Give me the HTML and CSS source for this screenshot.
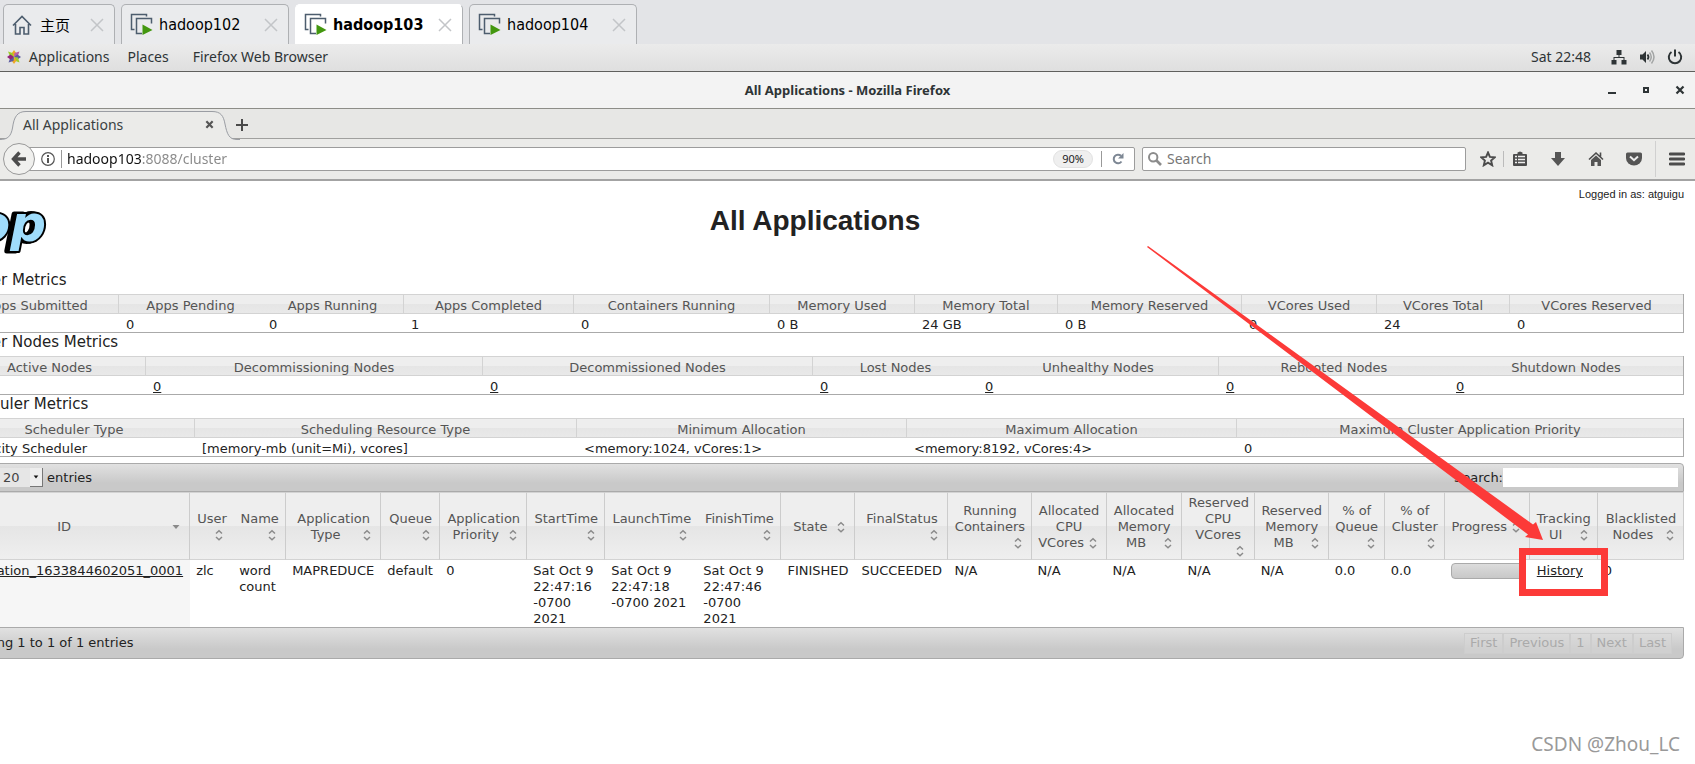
FILE: index.html
```html
<!DOCTYPE html>
<html lang="en">
<head>
<meta charset="utf-8">
<title>All Applications - Mozilla Firefox</title>
<link rel="stylesheet" href="styles.css">
</head>
<body>
<svg class="sprite" aria-hidden="true">
  <symbol id="sort" viewBox="0 0 16 16"><path d="M5 6.500 8 3.800l3 2.700M5 10l3 2.700L11 10" fill="none" stroke="#8a8a8a" stroke-width="1.500"/></symbol>
  <symbol id="sort-desc" viewBox="0 0 16 16"><path d="M4.500 6h7L8 10z" fill="#8a8a8a"/></symbol>
  <symbol id="vm" viewBox="0 0 24 24"><path d="M4.500 16.500H1.500V1.500h15v2" fill="none" stroke="#4d5d6e" stroke-width="1.500"/><path d="M12 20.500H6.500v-15h15v5" fill="none" stroke="#4d5d6e" stroke-width="1.500"/><path d="M12.500 11.500v10.500l10-5z" fill="#43970f"/></symbol>
  <symbol id="x" viewBox="0 0 14 14"><path d="M1 1l12 12M13 1 1 13" fill="none" stroke="#c3c5c8" stroke-width="1.500"/></symbol>
</svg>

<nav class="vm-tabs" aria-label="Virtual machines">
  <div class="vm-tab vm-tab-home">
    <svg class="vm-home" viewBox="0 0 20 20"><path d="M1 10.500 10 1.500l9 9M3.500 9v10h4.500v-6.500h4V19h4.500V9" fill="none" stroke="#4d5d6e" stroke-width="1.600"/></svg>
    <span>主页</span>
    <button class="vm-close" aria-label="Close"><svg><use href="#x"/></svg></button>
  </div>
  <div class="vm-tab"><svg class="vm-icon"><use href="#vm"/></svg><span>hadoop102</span><button class="vm-close" aria-label="Close"><svg><use href="#x"/></svg></button></div>
  <div class="vm-tab vm-tab-active"><svg class="vm-icon"><use href="#vm"/></svg><span>hadoop103</span><button class="vm-close" aria-label="Close"><svg><use href="#x"/></svg></button></div>
  <div class="vm-tab"><svg class="vm-icon"><use href="#vm"/></svg><span>hadoop104</span><button class="vm-close" aria-label="Close"><svg><use href="#x"/></svg></button></div>
</nav>

<header class="desktop-bar">
  <svg class="distro" viewBox="0 0 14 14"><path d="M7 7 4.500 3.500 7 0l2.500 3.500z" fill="#efa724"/><path d="M7 7 3 6.500 1 1.500l4.500 1.500z" fill="#9ccd2a"/><path d="M7 7l.5-4L12.500 1.500 11 5.500z" fill="#b95fa6"/><path d="M7 7l3.500-2.500L14 7l-3.500 2.500z" fill="#5c5ba0"/><path d="M7 7l4 .5 1.500 5L8.500 11z" fill="#9ccd2a"/><path d="M7 7l2.500 3.500L7 14l-2.500-3.500z" fill="#efa724"/><path d="M7 7l-.5 4-5 1.500L3 8.500z" fill="#5c5ba0"/><path d="M7 7 3.500 9.500 0 7l3.500-2.500z" fill="#932279"/></svg>
  <span class="menu-apps">Applications</span>
  <span class="menu-places">Places</span>
  <span class="menu-current">Firefox Web Browser</span>
  <span class="clock">Sat 22:48</span>
  <span class="status-icons">
    <svg width="16" height="16" viewBox="0 0 16 16"><path d="M5.500 1h5v5h-2v2H13.500v3H15.500v4.500h-5V11H12.500V9h-9v2h2v4.500h-5V11h2V8h5V6h-2z" fill="#2e3436"/></svg>
    <svg width="16" height="16" viewBox="0 0 16 16"><path d="M1 5.500h2.500L7 2v12l-3.500-3.500H1z" fill="#2e3436"/><path d="M8.500 5.500q2 2.500 0 5" fill="none" stroke="#2e3436" stroke-width="1.800"/><path d="M10.500 3.500q3.500 4.500 0 9M12.500 1.500q5 6.500 0 13" fill="none" stroke="#a3a5a5" stroke-width="1.500"/></svg>
    <svg width="16" height="16" viewBox="0 0 16 16"><path d="M4.500 3A6.200 6.200 0 1 0 11.500 3M8 .5v7" fill="none" stroke="#2e3436" stroke-width="2"/></svg>
  </span>
</header>

<div class="title-bar">
  <span class="title">All Applications - Mozilla Firefox</span>
  <div class="window-buttons">
    <button aria-label="Minimize"><svg viewBox="0 0 10 10"><path d="M1 7h8v2H1z" fill="#2e3436"/></svg></button>
    <button aria-label="Restore"><svg viewBox="0 0 10 10"><path d="M3 3h4v4H3z" fill="none" stroke="#2e3436" stroke-width="2"/></svg></button>
    <button aria-label="Close window"><svg viewBox="0 0 10 10"><path d="M1.500 1.500l7 7M8.500 1.500l-7 7" stroke="#2e3436" stroke-width="2.200"/></svg></button>
  </div>
</div>

<div class="tab-strip">
  <div class="browser-tab">
    <svg class="tab-shape" viewBox="0 0 240 30"><path d="M0 29.500C8 29.500 11 26 12.500 18 14 7 17 1.500 26 1.500H212C221 1.500 223.500 6 225 14 227 24 229 29.500 237 29.500V31H0z" fill="#ebebe9"/><path d="M0 29.500C8 29.500 11 26 12.500 18 14 7 17 1.500 26 1.500H212C221 1.500 223.500 6 225 14 227 24 229 29.500 237 29.500h3" fill="none" stroke="#9a9da3"/></svg>
    <span class="tab-label">All Applications</span>
    <button class="tab-close" aria-label="Close tab"><svg viewBox="0 0 10 10"><path d="M1.500 1.500l7 7M8.500 1.500l-7 7" stroke="#555" stroke-width="2.400"/></svg></button>
  </div>
  <button class="tab-new" aria-label="New tab"><svg viewBox="0 0 12 12"><path d="M6 0v12M0 6h12" stroke="#4a4a4a" stroke-width="2"/></svg></button>
</div>

<div class="nav-bar">
  <button class="back" aria-label="Back"><svg viewBox="0 0 16 16"><path d="M8.500 1.500 2.500 8l6 6.500M3 8h12" fill="none" stroke="#4c4c4c" stroke-width="3.400"/></svg></button>
  <div class="url-box">
    <svg class="info" viewBox="0 0 14 14"><circle cx="7" cy="7" r="6.300" fill="none" stroke="#555" stroke-width="1.200"/><path d="M7 6v5M7 3v2" stroke="#555" stroke-width="2"/></svg>
    <input class="url" type="text" aria-label="Address" value="hadoop103:8088/cluster">
    <button class="zoom">90%</button>
    <button class="reload" aria-label="Reload"><svg viewBox="0 0 12 12"><path d="M9.500 8.500A4.300 4.300 0 1 1 9 2.800" fill="none" stroke="#7d8794" stroke-width="2"/><path d="M11.500 0v5.500H6z" fill="#7d8794"/></svg></button>
  </div>
  <div class="search-box">
    <svg viewBox="0 0 14 14"><circle cx="5.200" cy="5.200" r="4.200" fill="none" stroke="#8c8c8c" stroke-width="2"/><path d="M8.500 8.500 13 13" stroke="#8c8c8c" stroke-width="2.600"/></svg>
    <input type="text" aria-label="Search the web" placeholder="Search">
  </div>
  <div class="tools">
    <button aria-label="Bookmark"><svg viewBox="0 0 16 16"><path d="M8 1.500l1.900 4.400 4.800.4-3.600 3.200 1.100 4.800L8 11.700l-4.200 2.600 1.100-4.800L1.300 6.300l4.800-.4z" fill="none" stroke="#4c4c4c" stroke-width="1.900"/></svg></button>
    <button class="library" aria-label="Bookmarks list"><svg viewBox="0 0 16 16"><path d="M2 3h3.500V1.500L8 .5l2.500 1V3H14q1 0 1 1v10q0 1-1 1H2q-1 0-1-1V4q0-1 1-1z" fill="#4c4c4c"/><path d="M3 5.500h2M6 5.500h7M3 8.500h2M6 8.500h7M3 11.500h2M6 11.500h7" stroke="#eee" stroke-width="1.600"/></svg></button>
    <button aria-label="Downloads"><svg viewBox="0 0 16 16"><path d="M5 1h6v6h4L8 15 1 7h4z" fill="#555"/></svg></button>
    <button aria-label="Home"><svg viewBox="0 0 16 16"><path d="M1 8.500 8 2l7 6.500M12.500 1.500v4" fill="none" stroke="#4c4c4c" stroke-width="1.600"/><path d="M8 4.500l5 4.500v6H9.500v-4h-3v4H3V9z" fill="#555"/></svg></button>
    <button aria-label="Pocket"><svg viewBox="0 0 16 16"><path d="M1.500 1.500h13q1.500 0 1.500 1.500v4a8 7.500 0 0 1-16 0V3q0-1.500 1.500-1.500z" fill="#555"/><path d="M4 5.500l4 3.700 4-3.700" fill="none" stroke="#eee" stroke-width="2"/></svg></button>
    <button class="app-menu" aria-label="Menu"><svg viewBox="0 0 16 16"><path d="M1 3h14M1 8h14M1 13h14" stroke="#4c4c4c" stroke-width="2.800" stroke-linecap="round"/></svg></button>
  </div>
</div>

<main class="page">
  <div class="content">
    <div class="user">Logged in as: atguigu</div>
    <div class="masthead">
      <svg class="logo" viewBox="0 0 94 56" role="img" aria-label="hadoop"><g text-anchor="end" class="logo-word"><text x="89" y="36" class="logo-shade">hadoop</text><text x="92" y="36" class="logo-face">hadoop</text></g></svg>
      <h1>All Applications</h1>
    </div>

    <h3>Cluster Metrics</h3>
    <table class="metrics">
      <colgroup><col class="w165"><col class="w143"><col class="w142"><col class="w170"><col class="w196"><col class="w145"><col class="w143"><col class="w184"><col class="w135"><col class="w133"><col class="w173"></colgroup>
      <thead><tr><th>Apps Submitted</th><th class="plain">Apps Pending</th><th>Apps Running</th><th>Apps Completed</th><th>Containers Running</th><th>Memory Used</th><th>Memory Total</th><th>Memory Reserved</th><th>VCores Used</th><th>VCores Total</th><th>VCores Reserved</th></tr></thead>
      <tbody><tr><td>1</td><td>0</td><td>0</td><td>1</td><td>0</td><td>0 B</td><td>24 GB</td><td>0 B</td><td>0</td><td>24</td><td>0</td></tr></tbody>
    </table>

    <h3>Cluster Nodes Metrics</h3>
    <table class="metrics">
      <colgroup><col class="w192"><col class="w337"><col class="w330"><col class="w165"><col class="w241"><col class="w230"><col class="w234"></colgroup>
      <thead><tr><th>Active Nodes</th><th>Decommissioning Nodes</th><th>Decommissioned Nodes</th><th class="plain">Lost Nodes</th><th>Unhealthy Nodes</th><th class="plain">Rebooted Nodes</th><th>Shutdown Nodes</th></tr></thead>
      <tbody><tr><td><a href="#">3</a></td><td><a href="#">0</a></td><td><a href="#">0</a></td><td><a href="#">0</a></td><td><a href="#">0</a></td><td><a href="#">0</a></td><td><a href="#">0</a></td></tr></tbody>
    </table>

    <h3>Scheduler Metrics</h3>
    <table class="metrics">
      <colgroup><col class="w241"><col class="w382"><col class="w330"><col class="w330"><col class="w446"></colgroup>
      <thead><tr><th>Scheduler Type</th><th>Scheduling Resource Type</th><th>Minimum Allocation</th><th>Maximum Allocation</th><th>Maximum Cluster Application Priority</th></tr></thead>
      <tbody><tr><td>Capacity Scheduler</td><td>[memory-mb (unit=Mi), vcores]</td><td>&lt;memory:1024, vCores:1&gt;</td><td>&lt;memory:8192, vCores:4&gt;</td><td>0</td></tr></tbody>
    </table>

    <div class="bar bar-top">
      <label class="length">Show <span class="select-wrap"><select><option>20</option></select><svg class="select-arrow" viewBox="0 0 13 19"><path d="M4 8h5L6.500 11z" fill="#111"/></svg></span> entries</label>
      <label class="filter">Search:<input type="text"></label>
    </div>

    <table class="apps">
      <colgroup><col class="w236"><col class="w43"><col class="w53"><col class="w95"><col class="w59"><col class="w87"><col class="w78"><col class="w92"><col class="w84"><col class="w74"><col class="w93"><col class="w83"><col class="w75"><col class="w75"><col class="w73"><col class="w74"><col class="w56"><col class="w60"><col class="w85"><col class="w68"><col class="w86"></colgroup>
      <thead><tr>
        <th><div>ID<svg><use href="#sort-desc"/></svg></div></th>
        <th class="plain"><div>User<svg><use href="#sort"/></svg></div></th>
        <th><div>Name<svg><use href="#sort"/></svg></div></th>
        <th><div>Application Type<svg><use href="#sort"/></svg></div></th>
        <th><div>Queue<svg><use href="#sort"/></svg></div></th>
        <th><div>Application Priority<svg><use href="#sort"/></svg></div></th>
        <th><div>StartTime<svg><use href="#sort"/></svg></div></th>
        <th class="plain"><div>LaunchTime<svg><use href="#sort"/></svg></div></th>
        <th><div>FinishTime<svg><use href="#sort"/></svg></div></th>
        <th><div>State<svg><use href="#sort"/></svg></div></th>
        <th><div>FinalStatus<svg><use href="#sort"/></svg></div></th>
        <th><div>Running Containers<svg><use href="#sort"/></svg></div></th>
        <th><div>Allocated CPU VCores<svg><use href="#sort"/></svg></div></th>
        <th><div>Allocated Memory MB<svg><use href="#sort"/></svg></div></th>
        <th class="tight"><div>Reserved CPU VCores<svg><use href="#sort"/></svg></div></th>
        <th><div>Reserved Memory MB<svg><use href="#sort"/></svg></div></th>
        <th><div>% of Queue<svg><use href="#sort"/></svg></div></th>
        <th><div>% of Cluster<svg><use href="#sort"/></svg></div></th>
        <th><div>Progress<svg><use href="#sort"/></svg></div></th>
        <th><div>Tracking UI<svg><use href="#sort"/></svg></div></th>
        <th><div>Blacklisted Nodes<svg><use href="#sort"/></svg></div></th>
      </tr></thead>
      <tbody><tr>
        <td class="app-id"><a href="#">application_1633844602051_0001</a></td>
        <td>zlc</td><td>word count</td><td>MAPREDUCE</td><td>default</td><td>0</td>
        <td>Sat Oct 9 22:47:16 -0700 2021</td><td>Sat Oct 9 22:47:18 -0700 2021</td><td>Sat Oct 9 22:47:46 -0700 2021</td>
        <td>FINISHED</td><td>SUCCEEDED</td><td>N/A</td><td>N/A</td><td>N/A</td><td>N/A</td><td>N/A</td><td>0.0</td><td>0.0</td>
        <td><div class="progress"></div></td>
        <td class="history"><a href="#">History</a>
          <svg class="arrow" viewBox="0 0 400 300" aria-hidden="true"><path d="M0 1 1 0 386 278.500 389 276 396 294 378 291 381 288.500z" fill="#fc3a38"/></svg>
          <span class="mark"></span></td>
        <td>0</td>
      </tr></tbody>
    </table>

    <div class="bar bar-bottom">
      <span>Showing 1 to 1 of 1 entries</span>
      <div class="pager"><button disabled>First</button><button disabled>Previous</button><button disabled>1</button><button disabled>Next</button><button disabled>Last</button></div>
    </div>
  </div>
  <div class="watermark">CSDN @Zhou_LC</div>
</main>
</body>
</html>
```
FILE: styles.css
```css
* { box-sizing: border-box; }
body {
  margin: 0;
  min-height: 100vh;
  display: flex;
  flex-direction: column;
  background: #fff;
  color: #222;
  font: 13px/16px "DejaVu Sans", sans-serif;
  overflow-x: hidden;
}
button { border: 0; padding: 0; background: none; font: inherit; color: inherit; }
svg { display: block; flex: none; }
.sprite { position: absolute; width: 0; height: 0; }

/* Virtual machine tabs */
.vm-tabs {
  display: flex;
  align-items: flex-end;
  gap: 6px;
  height: 44px;
  padding-left: 3px;
  background: #e3e4e7;
  color: #000;
  font: 16px/20px "DejaVu Sans Condensed", "DejaVu Sans", "Noto Sans CJK SC", sans-serif;
}
.vm-tab {
  display: flex;
  align-items: center;
  width: 168px;
  height: 40px;
  padding: 0 10px 0 8px;
  border: 1px solid #aeb0b3;
  border-bottom: 0;
  border-radius: 5px 5px 0 0;
  background: #eaebed;
}
.vm-tab-home { width: 112px; font: 15px/20px "Noto Sans CJK SC", sans-serif; }
.vm-tab-active { background: #fff; border-color: #fff #aeb0b3 #fff #fff; font-weight: bold; }
.vm-home { width: 20px; height: 20px; margin-right: 8px; }
.vm-icon { width: 24px; height: 24px; margin-right: 5px; }
.vm-close { margin-left: auto; }
.vm-close svg { width: 14px; height: 14px; }

/* Desktop panel */
.desktop-bar {
  display: flex;
  align-items: center;
  height: 28px;
  padding: 0 12px 2px 7px;
  border-bottom: 1px solid #5f5f5d;
  background: linear-gradient(#ebebeb, #dfdfdf);
  color: #2e3436;
  font: 14px/18px "Noto Sans", sans-serif;
}
.distro { width: 14px; height: 14px; margin-right: 8px; }
.menu-places { margin-left: 18px; }
.menu-current { margin-left: 24px; }
.clock { margin-left: auto; }
.status-icons { display: flex; gap: 12px; margin-left: 20px; }

/* Window title */
.title-bar {
  display: flex;
  align-items: center;
  justify-content: center;
  position: relative;
  height: 37px;
  border-bottom: 1px solid #8d8d88;
  background: #f3f3f3;
  color: #2e3436;
  font: bold 13px/18px "Noto Sans", sans-serif;
}
.window-buttons { position: absolute; right: 10px; display: flex; gap: 24px; }
.window-buttons svg { width: 10px; height: 10px; }

.tab-strip {
  display: flex;
  align-items: center;
  height: 30px;
  background: #e7e7e5;
  border-bottom: 1px solid #a0a09e;
  font: 14px/18px "Noto Sans", sans-serif;
  color: #3a3f41;
}
.browser-tab { position: relative; display: flex; align-items: center; width: 236px; height: 30px; padding: 2px 22px 0 23px; }
.tab-shape { position: absolute; left: 0; top: 1px; width: 240px; height: 30px; }
.tab-label, .tab-close { position: relative; }
.tab-close { margin-left: auto; }
.tab-close svg { width: 9px; height: 9px; }
.tab-new { padding-top: 3px; }
.tab-new svg { width: 12px; height: 12px; }

/* Navigation */
.nav-bar {
  display: flex;
  align-items: center;
  height: 42px;
  padding: 0 10px 0 3px;
  background: #ebebe9;
  border-bottom: 2px solid #a3a3a3;
  font: 14px/18px "Noto Sans", sans-serif;
}
.back {
  position: relative;
  z-index: 1;
  display: grid;
  place-items: center;
  width: 32px;
  height: 32px;
  border: 1px solid #999;
  border-radius: 50%;
  background: #f0f0ee;
}
.back svg { width: 16px; height: 16px; }
.url-box, .search-box {
  display: flex;
  align-items: center;
  height: 24px;
  border: 1px solid #9c9c9c;
  border-radius: 2px;
  background: #fff;
}
.url-box { flex: 1; margin-left: -8px; padding: 0 10px 0 13px; }
.info { width: 14px; height: 14px; margin-right: 6px; }
.url {
  flex: 1;
  min-width: 0;
  height: 18px;
  padding: 0 0 0 5px;
  border: 0;
  border-left: 1px solid #999;
  outline: 0;
  font: inherit;
  color: transparent;
  background: linear-gradient(to right, #111 80px, #888 80px);
  -webkit-background-clip: text;
  background-clip: text;
}
.zoom { width: 40px; height: 18px; border: 1px solid #e2e2e2; border-radius: 9px; background: #efefef; color: #222; font-size: 11px; line-height: 16px; }
.reload { margin-left: 8px; padding-left: 10px; border-left: 1px solid #999; height: 16px; }
.reload svg { width: 12px; height: 12px; }
.search-box { width: 324px; margin-left: 7px; padding-left: 5px; }
.search-box svg { width: 14px; height: 14px; }
.search-box input { flex: 1; min-width: 0; padding: 0 0 0 5px; border: 0; outline: 0; background: none; font: inherit; }
.search-box input::placeholder { color: #777; }
.tools { display: flex; align-items: center; gap: 22px; margin-left: 14px; }
.tools svg { width: 16px; height: 16px; }
.library { margin-left: -15px; padding-left: 8px; border-left: 1px solid #bbb; }
.app-menu { height: 36px; margin-left: -9px; padding-left: 13px; border-left: 1px solid #d0d0d0; }

/* Page, scrolled a little to the right */
.page { position: relative; flex: 1; overflow: hidden; }
.content { margin: 0 11px 0 -46px; }
.user { padding-top: 5px; text-align: right; font: 11px/16px "Liberation Sans", sans-serif; }
.masthead { display: flex; align-items: flex-start; height: 69px; padding-top: 3px; }
.logo { width: 94px; height: 56px; overflow: visible; }
.logo-word { font: italic bold 50px "DejaVu Sans", sans-serif; stroke-linejoin: round; }
.logo-shade { fill: #000; stroke: #000; stroke-width: 5px; }
.logo-face { fill: #9fdcfb; stroke: #000; stroke-width: 4px; paint-order: stroke; }
h1 { flex: 1; margin: 0 102px 0 0; text-align: center; font: bold 28px/32px "Liberation Sans", sans-serif; }
h3 { margin: 0; padding-bottom: 5px; font: 15px/18px "DejaVu Sans", sans-serif; }

a { color: inherit; text-decoration: underline; }
table { width: 100%; table-layout: fixed; border-collapse: separate; border-spacing: 0; }
th { font-weight: normal; color: #555; border: 1px solid #d3d3d3; border-left: 0; background: linear-gradient(#eeeeee 0 50%, #e5e5e5 50%, #efefef); }
th.plain { border-right: 0; }
td { text-align: left; vertical-align: top; }
.metrics { border-right: 1px solid #aaa; border-bottom: 1px solid #aaa; }
.metrics th { padding: 3px 6px 0; line-height: 15px; background: linear-gradient(#eeeeee 0 50%, #e5e5e5 50%, #e9e9e9); }
.metrics td { padding: 4px 7px 0; line-height: 14px; }
.metrics th:last-child { border-right: 0; }

.bar {
  display: flex;
  align-items: center;
  justify-content: space-between;
  border: 1px solid #aaa;
  background: linear-gradient(#e1e1e1, #c9c9c9 70%);
}
.bar-top { height: 29px; margin-top: 6px; padding: 0 5px; border-radius: 4px 4px 0 0; }
.bar-bottom { height: 32px; padding: 0 11px 0 3px; border-radius: 0 0 4px 4px; }
.length, .filter { display: flex; align-items: center; }
.length { gap: 4px; }
.select-wrap { position: relative; display: flex; }
.select-wrap select { appearance: none; width: 44px; height: 19px; padding: 0 0 0 4px; border: 0; border-radius: 0; background: #e6e6e6; color: #444; font: inherit; }
.select-arrow { position: absolute; right: 0; top: 0; width: 13px; height: 19px; background: #eee; border-right: 1px solid #777; border-bottom: 1px solid #777; pointer-events: none; }
.filter input { width: 175px; height: 19px; padding: 0; border: 0; background: #fff; font: inherit; }
.pager { display: flex; }
.pager button { height: 21px; padding: 0 5px; border: 1px solid #cdcdcd; background: #d4d4d4; background: rgb(220 220 220 / 35%); color: #aaa; }

.apps th { height: 67px; padding: 2px 5px 0 6px; vertical-align: middle; text-align: center; border-right-color: #ccc; }
.apps th.plain, .apps th.tight { padding-right: 6px; padding-left: 7px; }
.apps th div { display: flow-root; }
.apps th svg { float: right; width: 16px; height: 16px; }
.apps td { padding: 3px 6px 0; height: 67px; }
.apps .app-id { padding: 3px 7px 0 0; background: #f6f6f6; text-align: right; white-space: nowrap; }
.progress { height: 16px; border: 1px solid #aaa; border-radius: 4px; background: linear-gradient(#dcdcdc, #c8c8c8); }

/* Annotations */
.history { position: relative; }
.apps .history { padding-left: 7px; }
.mark { position: absolute; left: -11px; top: -12px; width: 89px; height: 48px; border: 7px solid #fc3a38; }
.arrow { position: absolute; right: 51px; bottom: 81px; width: 400px; height: 300px; z-index: 1; pointer-events: none; }
.watermark { position: absolute; right: 15px; bottom: 6px; color: #999; font: 19px/28px "Noto Sans", sans-serif; }

/* Proportions of the table columns */
.w43 { width: 43px; } .w53 { width: 53px; } .w56 { width: 56px; } .w59 { width: 59px; }
.w60 { width: 60px; } .w68 { width: 68px; } .w73 { width: 73px; } .w74 { width: 74px; }
.w75 { width: 75px; } .w78 { width: 78px; } .w83 { width: 83px; } .w84 { width: 84px; }
.w85 { width: 85px; } .w86 { width: 86px; } .w87 { width: 87px; } .w92 { width: 92px; }
.w93 { width: 93px; } .w95 { width: 95px; } .w133 { width: 133px; } .w135 { width: 135px; }
.w142 { width: 142px; } .w143 { width: 143px; } .w145 { width: 145px; } .w165 { width: 165px; }
.w170 { width: 170px; } .w173 { width: 173px; } .w184 { width: 184px; } .w192 { width: 192px; }
.w196 { width: 196px; } .w230 { width: 230px; } .w234 { width: 234px; } .w236 { width: 236px; }
.w241 { width: 241px; } .w330 { width: 330px; } .w337 { width: 337px; } .w382 { width: 382px; }
.w446 { width: 446px; }
```
